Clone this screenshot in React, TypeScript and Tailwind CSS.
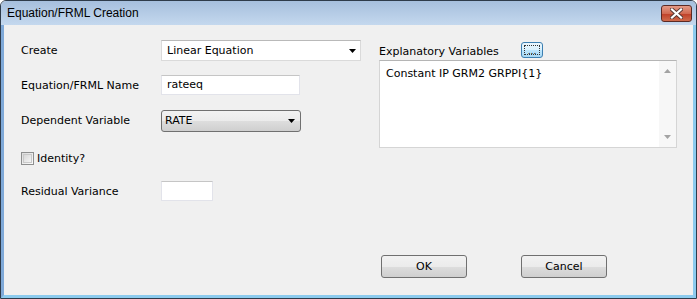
import React from "react";

const font = { fontFamily: '"DejaVu Sans", Tahoma, sans-serif' };

const Arrow = ({ color = "#000" }: { color?: string }) => (
  <svg width="7" height="4" viewBox="0 0 7 4">
    <path d="M0 0h7L3.5 4z" fill={color} />
  </svg>
);

const WinButton = ({ label }: { label: string }) => (
  <button className="flex h-[23px] w-[86px] items-center justify-center rounded-[3px] border border-[#707070] bg-[linear-gradient(#f2f2f2_0%,#ebebeb_50%,#dddddd_51%,#cfcfcf_100%)] pt-[1px] text-[11px] text-black">
    {label}
  </button>
);

export default function App() {
  return (
    <div
      className="flex h-[299px] w-[697px] flex-col overflow-hidden rounded-t-[6px] border border-[#2e3b4a] bg-[#f0f0f0] text-[11px] text-black"
      style={font}
    >
      {/* title bar */}
      <div className="flex h-[24px] shrink-0 items-center justify-between bg-[linear-gradient(#a6bfdd,#c4d8ee)] pl-[6px] pr-[4px]">
        <span className="text-[12px] text-black" style={{ fontFamily: '"Liberation Sans", Arial, sans-serif' }}>
          Equation/FRML Creation
        </span>
        <div className="flex h-[17px] w-[31px] items-center justify-center rounded-[3px] border border-[#5b2a24] bg-[linear-gradient(#e49a86,#d16a52_50%,#bf3e27_51%,#cf6b4c)]">
          <svg width="13" height="11" viewBox="0 0 13 11">
            <path d="M2 1.5L11 9.5M11 1.5L2 9.5" stroke="#5a3a36" strokeWidth="4" strokeLinecap="square" />
            <path d="M2 1.5L11 9.5M11 1.5L2 9.5" stroke="#ffffff" strokeWidth="2.2" strokeLinecap="square" />
          </svg>
        </div>
      </div>

      {/* client area */}
      <div className="flex flex-1 border-b-[3px] border-l-[3px] border-r-[3px] border-b-[#8ccbee] border-l-[#7fa9d8] border-r-[#8ccbee]">
        {/* left column */}
        <div className="flex w-[358px] flex-col pl-[17px] pt-[15px]">
          <div className="flex h-[21px] items-center">
            <span className="w-[140px] pt-[2px]">Create</span>
            <div className="flex h-[21px] w-[200px] items-center justify-between border border-[#dadada] border-t-[#b9b9b9] bg-white pl-[5px] pr-[4px]">
              <span className="pt-[1px]">Linear Equation</span>
              <Arrow />
            </div>
          </div>
          <div className="mt-[14px] flex h-[20px] items-center">
            <span className="w-[140px] pt-[2px]">Equation/FRML Name</span>
            <div className="flex h-[20px] w-[139px] items-center border border-[#e2e3ea] border-t-[#c5c5c5] bg-white pl-[5px] pt-[1px]">
              rateeq
            </div>
          </div>
          <div className="mt-[15px] flex h-[21px] items-center">
            <span className="w-[140px] pt-[2px]">Dependent Variable</span>
            <div className="flex h-[22px] w-[140px] items-center justify-between rounded-[3px] border border-[#707070] bg-[linear-gradient(#f2f2f2_0%,#ebebeb_50%,#dddddd_51%,#cfcfcf_100%)] pl-[3px] pr-[5px]">
              <span className="pt-[1px]">RATE</span>
              <Arrow />
            </div>
          </div>
          <div className="mt-[21px] flex h-[13px] items-center">
            <div className="h-[13px] w-[13px] border border-[#8e8f8f] bg-[linear-gradient(135deg,#dcdcdc,#fbfbfb)] p-[1px]">
              <div className="h-full w-full border border-[#c9c9c9] bg-[linear-gradient(135deg,#d8d8d8,#f4f4f4)]" />
            </div>
            <span className="ml-[3px] pt-[2px]">Identity?</span>
          </div>
          <div className="mt-[16px] flex h-[20px] items-center">
            <span className="w-[140px] pt-[2px]">Residual Variance</span>
            <div className="h-[20px] w-[52px] border border-[#e2e3ea] border-t-[#c5c5c5] bg-white" />
          </div>
        </div>

        {/* right column */}
        <div className="flex flex-col pl-[17px] pt-[17px]">
          <div className="flex h-[16px] items-center">
            <span className="w-[142px] pt-[4px]">Explanatory Variables</span>
            <div className="flex h-[16px] w-[22px] items-end justify-center rounded-[3px] border border-[#3c7fb1] bg-[linear-gradient(#eaf6fd,#d9f0fc_50%,#bee6fd_51%,#a7d9f5)] p-[2px]">
              <div className="flex h-full w-full items-end justify-center border border-dotted border-[#333]">
                <span className="text-[9px] leading-[6px]">...</span>
              </div>
            </div>
          </div>
          <div className="mt-[2px] flex h-[88px] w-[298px] border border-[#d5d5d5] border-t-[#b5b5b5] bg-white">
            <div className="flex-1 pl-[6px] pt-[5px]">Constant IP GRM2 GRPPI{"{1}"}</div>
            <div className="flex w-[17px] flex-col items-center justify-between bg-[#f7f7f7] py-[8px]">
              <svg width="7" height="4" viewBox="0 0 7 4">
                <path d="M3.5 0L7 4H0z" fill="#a3a3a3" />
              </svg>
              <Arrow color="#a3a3a3" />
            </div>
          </div>
          <div className="ml-[2px] mt-[107px] flex gap-[54px]">
            <WinButton label="OK" />
            <WinButton label="Cancel" />
          </div>
        </div>
      </div>
    </div>
  );
}
